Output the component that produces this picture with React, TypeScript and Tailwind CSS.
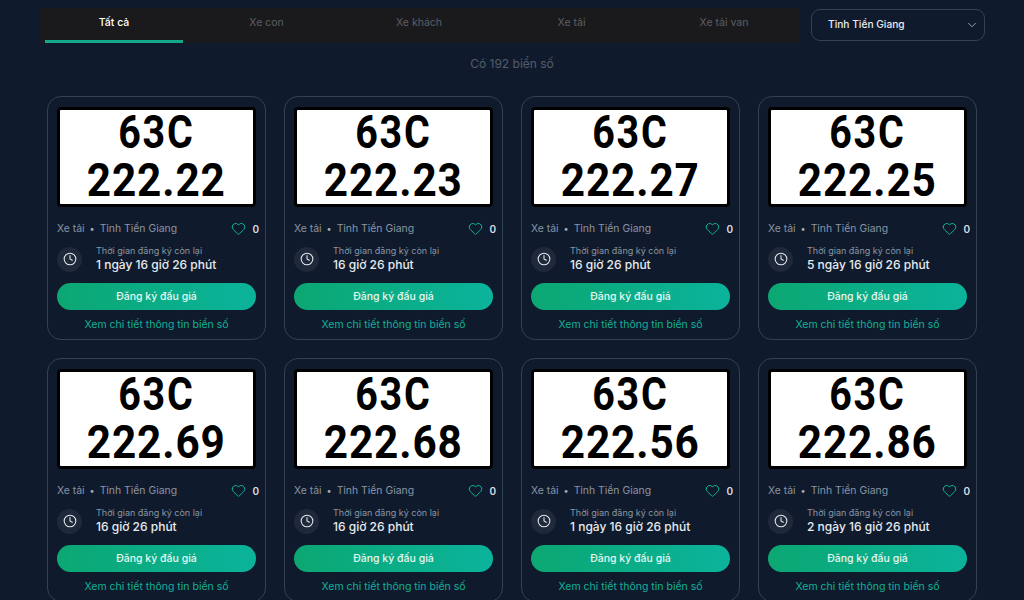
import { ChevronDown, Clock, Heart } from "lucide-react";

const tabs = ["Tất cả", "Xe con", "Xe khách", "Xe tải", "Xe tải van"];

const plates = [
  { serial: "222.22", time: "1 ngày 16 giờ 26 phút" },
  { serial: "222.23", time: "16 giờ 26 phút" },
  { serial: "222.27", time: "16 giờ 26 phút" },
  { serial: "222.25", time: "5 ngày 16 giờ 26 phút" },
  { serial: "222.69", time: "16 giờ 26 phút" },
  { serial: "222.68", time: "16 giờ 26 phút" },
  { serial: "222.56", time: "1 ngày 16 giờ 26 phút" },
  { serial: "222.86", time: "2 ngày 16 giờ 26 phút" },
];

function PlateCard({ serial, time }: { serial: string; time: string }) {
  return (
    <div className="h-[244px] rounded-[14px] border border-[#334155] px-[9px] pt-[10px]">
      <div className="flex h-[100px] flex-col items-center rounded-[4px] border-[3px] border-black bg-white font-['Roboto',sans-serif] text-[47px] leading-[48px] font-bold text-black">
        <div className="-mt-[2px] scale-x-[0.84] tracking-[2px]">63C</div>
        <div className="scale-x-[0.9] tracking-[1px]">{serial}</div>
      </div>

      <div className="mt-[14px] flex h-[16px] items-center text-[10.4px] text-[#8b95a3]">
        <span>Xe tải</span>
        <span className="mx-[5px] text-[9px] text-[#a5adb8]">•</span>
        <span>Tỉnh Tiền Giang</span>
        <Heart className="mr-[6px] ml-auto -mt-[1px] h-[15px] w-[15px] text-[#10b39a]" strokeWidth={1.6} />
        <span className="-mr-[3px] text-[10px] font-semibold text-[#d8dde3]">0</span>
      </div>

      <div className="mt-[7px] flex h-[30px] items-center">
        <div className="flex h-[25px] w-[25px] items-center justify-center rounded-full bg-[#1e293b]">
          <Clock className="h-[14px] w-[14px] text-[#e5e7eb]" strokeWidth={1.8} />
        </div>
        <div className="ml-[14px]">
          <div className="text-[9px] leading-[12px] text-[#8b95a3]">Thời gian đăng ký còn lại</div>
          <div className="text-[12px] leading-[16px] font-medium text-[#e8ebef]">{time}</div>
        </div>
      </div>

      <button className="mt-[9px] block h-[27px] w-full rounded-full bg-gradient-to-r from-[#0ca772] to-[#0bb39b] text-[10.5px] font-medium text-[#e6f7f1]">
        Đăng ký đấu giá
      </button>

      <div className="mt-[8px] text-center text-[10.5px] leading-[14px] text-[#14b096]">
        Xem chi tiết thông tin biển số
      </div>
    </div>
  );
}

export default function App() {
  return (
    <div className="h-[600px] w-[1024px] overflow-hidden bg-[#0f1b2d] pt-[8px] font-['Inter',sans-serif]">
      <div className="ml-[40px] flex h-[35px] items-start">
        <div className="flex h-[35px] w-[760px] gap-[14.5px] bg-[#1a1a1c] pr-[7px] pl-[5px]">
          {tabs.map((tab, i) => (
            <div
              key={tab}
              className={
                i === 0
                  ? "h-[35px] w-[138px] border-b-[3px] border-[#14a88f] pt-[7px] text-center text-[10.5px] font-medium text-white"
                  : "h-[35px] w-[138px] pt-[7px] text-center text-[10.5px] text-[#5c5f66]"
              }
            >
              {tab}
            </div>
          ))}
        </div>
        <div className="mt-[1px] ml-[11px] flex h-[32px] w-[174px] items-center justify-between rounded-[9px] border border-[#334155] pr-[5px] pl-[16px] text-[10.2px] font-medium text-[#e8ebef]">
          <span>Tỉnh Tiền Giang</span>
          <ChevronDown className="h-[14px] w-[14px] text-[#aab2bd]" strokeWidth={1.5} />
        </div>
      </div>

      <div className="mt-[13px] text-center text-[12px] leading-[16px] text-[#525d6c]">Có 192 biển số</div>

      <div className="mt-[24px] ml-[47px] grid w-[930px] grid-cols-4 gap-[18px]">
        {plates.map((plate) => (
          <PlateCard key={plate.serial} serial={plate.serial} time={plate.time} />
        ))}
      </div>
    </div>
  );
}
